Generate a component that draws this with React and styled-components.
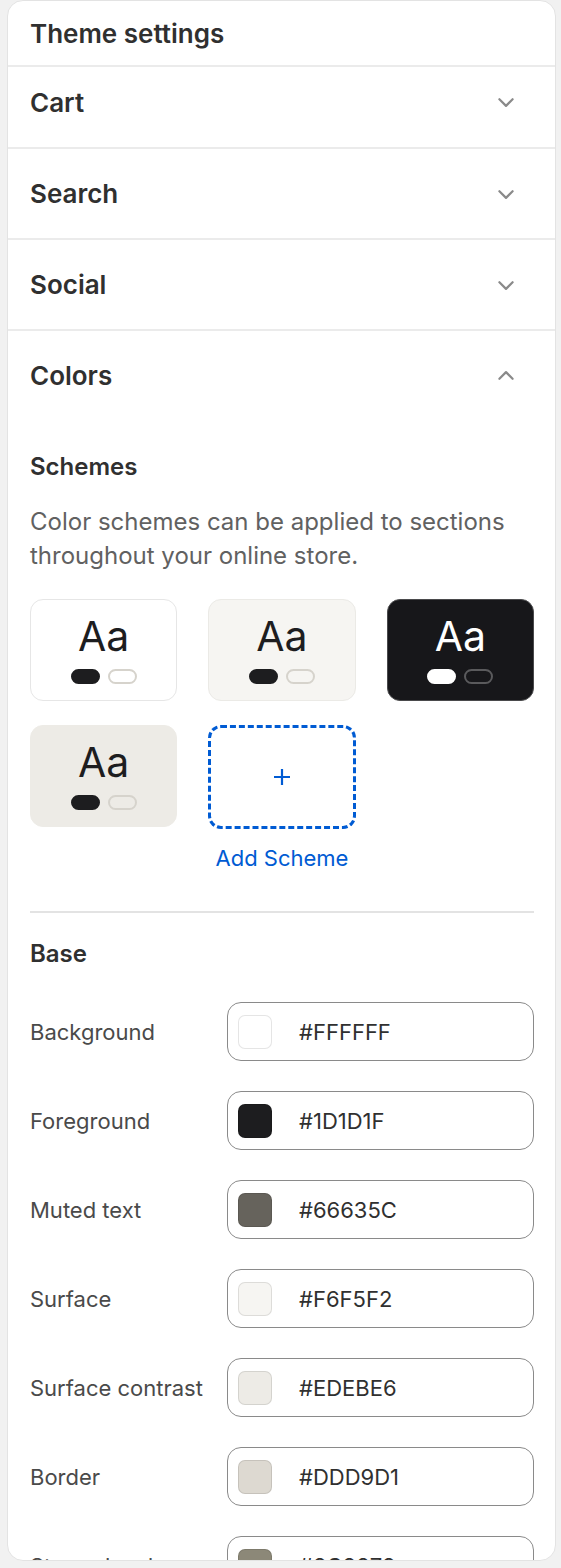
import React from "react";
import styled, { createGlobalStyle } from "styled-components";

const GlobalStyle = createGlobalStyle`
  html, body {
    margin: 0;
    padding: 0;
    background: #f1f1f1;
    font-family: Inter, "Noto Sans", sans-serif;
    -webkit-font-smoothing: antialiased;
  }
`;

const Panel = styled.div`
  box-sizing: border-box;
  margin-left: 7px;
  width: 549px;
  height: 1561px;
  background: #ffffff;
  border: 1px solid #e3e3e3;
  border-radius: 16px;
  overflow: hidden;
`;

const Header = styled.div`
  height: 66px;
  box-sizing: border-box;
  padding: 0 22px;
  display: flex;
  align-items: center;
  border-bottom: 2px solid #ebebeb;
  font-size: 26px;
  font-weight: 600;
  color: #303030;
`;

const Section = styled.div`
  border-bottom: ${(p) => (p.open ? "none" : "2px solid #ebebeb")};
`;

const SectionHead = styled.div`
  box-sizing: border-box;
  height: ${(p) => (p.compact ? "80px" : "89px")};
  padding: 0 38px ${(p) => (p.compact ? "10px" : "0")} 22px;
  display: flex;
  align-items: center;
  justify-content: space-between;
  font-size: 26px;
  font-weight: 600;
  color: #303030;
`;

const Chevron = styled.svg`
  width: 22px;
  height: 22px;
  color: #8a8a8a;
`;

const Body = styled.div`
  padding: 32px 21px 40px 22px;
`;

const SubTitle = styled.div`
  font-size: 24px;
  font-weight: 600;
  line-height: 30px;
  color: #303030;
`;

const Description = styled.p`
  margin: 23px 0 26px 0;
  font-size: 24px;
  line-height: 34px;
  color: #616161;
`;

const SchemeGrid = styled.div`
  display: grid;
  grid-template-columns: repeat(3, 1fr);
  column-gap: 31px;
  row-gap: 24px;
`;

const SchemeCard = styled.div`
  box-sizing: border-box;
  height: 102px;
  border-radius: 13px;
  background: ${(p) => p.bg};
  border: 1.5px solid ${(p) => p.edge};
  display: flex;
  flex-direction: column;
  align-items: center;
  padding-top: 13px;
  gap: 10px;
`;

const Sample = styled.div`
  font-size: 41px;
  line-height: 46px;
  color: ${(p) => p.fg};
`;

const Pills = styled.div`
  display: flex;
  gap: 8px;
`;

const Pill = styled.div`
  box-sizing: border-box;
  width: 29px;
  height: 15px;
  border-radius: 8px;
  background: ${(p) => p.fill};
  border: 2px solid ${(p) => p.edge};
`;

const AddWrap = styled.div`
  display: flex;
  flex-direction: column;
  align-items: center;
  gap: 15px;
`;

const AddCard = styled.button`
  box-sizing: border-box;
  width: 100%;
  height: 104px;
  border: 3px dashed #005bd3;
  border-radius: 13px;
  background: #ffffff;
  display: flex;
  align-items: center;
  justify-content: center;
  padding: 0;
  cursor: pointer;
`;

const AddLabel = styled.span`
  font-size: 22px;
  line-height: 28px;
  color: #005bd3;
`;

const Divider = styled.hr`
  margin: 39px 0 26px 0;
  border: none;
  border-top: 2px solid #e3e3e3;
`;

const FieldList = styled.div`
  margin-top: 33px;
  display: flex;
  flex-direction: column;
  gap: 30px;
`;

const FieldRow = styled.div`
  display: grid;
  grid-template-columns: 197px 1fr;
  align-items: center;
`;

const FieldLabel = styled.label`
  font-size: 22px;
  color: #4a4a4a;
  white-space: nowrap;
`;

const ColorInput = styled.div`
  box-sizing: border-box;
  height: 59px;
  border: 1.5px solid #8a8a8a;
  border-radius: 14px;
  display: flex;
  align-items: center;
  padding-left: 10px;
  gap: 27px;
  font-size: 22px;
  color: #303030;
`;

const Swatch = styled.span`
  box-sizing: border-box;
  width: 34px;
  height: 34px;
  border-radius: 7px;
  background: ${(p) => p.color};
  border: 1.5px solid rgba(0, 0, 0, 0.1);
`;

const ChevronIcon = ({ up }) => (
  <Chevron viewBox="0 0 20 20" fill="none">
    <path
      d={up ? "M4 12.5l6-6 6 6" : "M4 7.5l6 6 6-6"}
      stroke="currentColor"
      strokeWidth="2"
      strokeLinecap="round"
      strokeLinejoin="round"
    />
  </Chevron>
);

const schemes = [
  { bg: "#ffffff", edge: "#e6e6e6", fg: "#1d1d1f", a: "#1d1d1f", b: "#d6d3cc", bFill: "#ffffff" },
  { bg: "#f6f5f2", edge: "#ebeae6", fg: "#1d1d1f", a: "#1d1d1f", b: "#d6d3cc", bFill: "#f6f5f2" },
  { bg: "#17171a", edge: "#4a4a4c", fg: "#ffffff", a: "#ffffff", b: "#5a5a5c", bFill: "#17171a" },
  { bg: "#edebe6", edge: "#edebe6", fg: "#1d1d1f", a: "#1d1d1f", b: "#d6d3cc", bFill: "#edebe6" },
];

const fields = [
  ["Background", "#FFFFFF"],
  ["Foreground", "#1D1D1F"],
  ["Muted text", "#66635C"],
  ["Surface", "#F6F5F2"],
  ["Surface contrast", "#EDEBE6"],
  ["Border", "#DDD9D1"],
  ["Strong border", "#8C8878"],
];

export default function App() {
  return (
    <>
      <GlobalStyle />
      <Panel>
        <Header>Theme settings</Header>
        <Section>
          <SectionHead compact>
            Cart
            <ChevronIcon />
          </SectionHead>
        </Section>
        {["Search", "Social"].map((name) => (
          <Section key={name}>
            <SectionHead>
              {name}
              <ChevronIcon />
            </SectionHead>
          </Section>
        ))}
        <Section open>
          <SectionHead>
            Colors
            <ChevronIcon up />
          </SectionHead>
          <Body>
            <SubTitle>Schemes</SubTitle>
            <Description>
              Color schemes can be applied to sections throughout your online store.
            </Description>
            <SchemeGrid>
              {schemes.map((s, i) => (
                <SchemeCard key={i} bg={s.bg} edge={s.edge}>
                  <Sample fg={s.fg}>Aa</Sample>
                  <Pills>
                    <Pill fill={s.a} edge={s.a} />
                    <Pill fill={s.bFill} edge={s.b} />
                  </Pills>
                </SchemeCard>
              ))}
              <AddWrap>
                <AddCard aria-label="Add Scheme">
                  <svg width="20" height="20" viewBox="0 0 20 20">
                    <path d="M10 2v16M2 10h16" stroke="#005bd3" strokeWidth="2.2" />
                  </svg>
                </AddCard>
                <AddLabel>Add Scheme</AddLabel>
              </AddWrap>
            </SchemeGrid>
            <Divider />
            <SubTitle>Base</SubTitle>
            <FieldList>
              {fields.map(([label, hex]) => (
                <FieldRow key={label}>
                  <FieldLabel>{label}</FieldLabel>
                  <ColorInput>
                    <Swatch color={hex} />
                    {hex}
                  </ColorInput>
                </FieldRow>
              ))}
            </FieldList>
          </Body>
        </Section>
      </Panel>
    </>
  );
}
